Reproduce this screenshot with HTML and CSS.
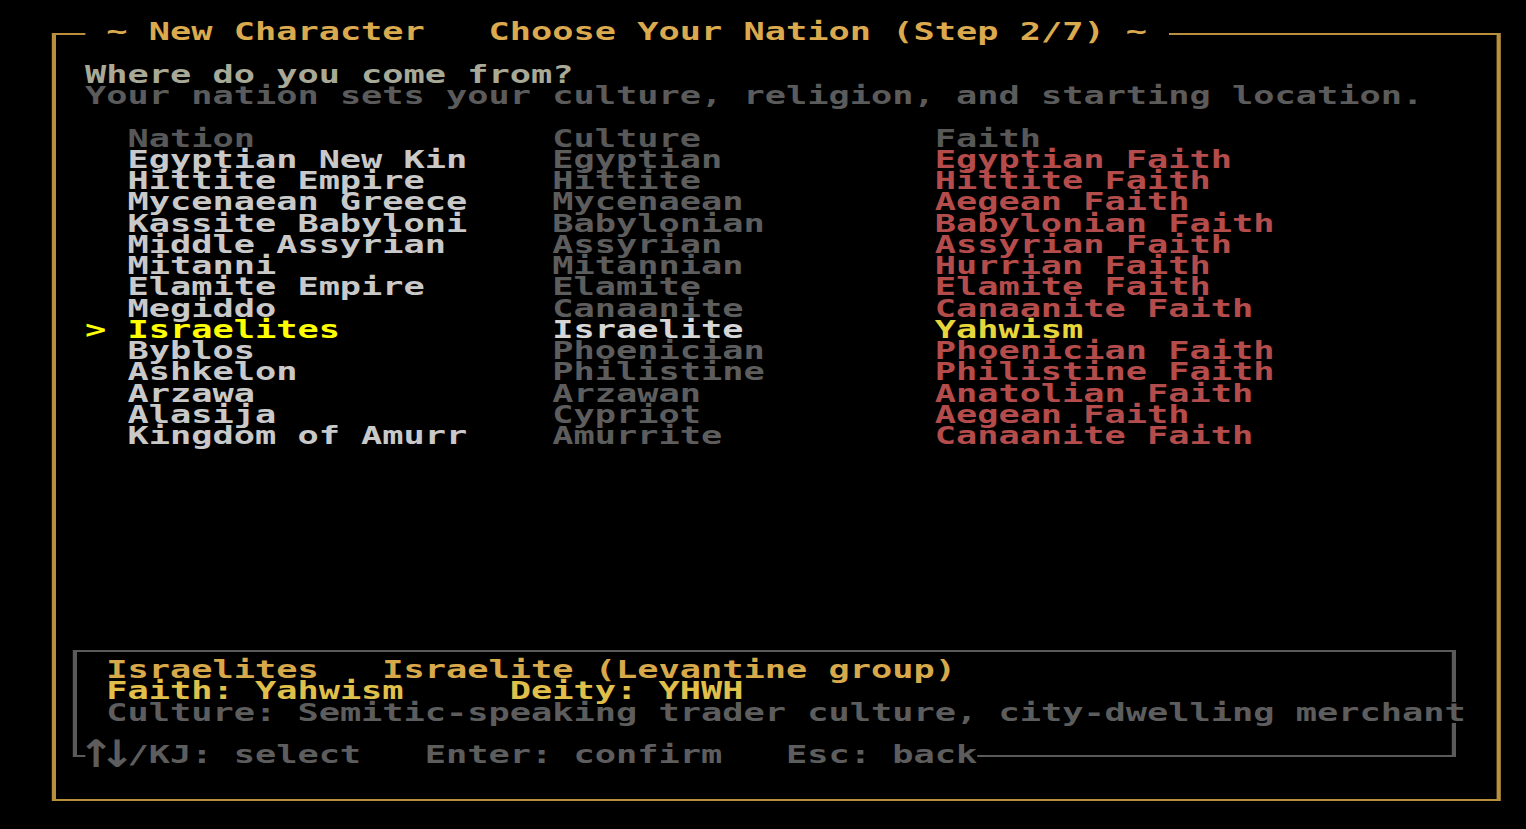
FILE: index.html
```html
<!DOCTYPE html>
<html>
<head>
<meta charset="utf-8">
<title>New Character</title>
<link rel="stylesheet" href="styles.css">
</head>
<body>
<div class="screen">
  <div class="frame">
    <div class="title"> ~ New Character   Choose Your Nation (Step 2/7) ~ </div>
    <div class="intro">
      <div class="question">Where do you come from?</div>
      <div class="subtitle">Your nation sets your culture, religion, and starting location.</div>
    </div>
    <div class="table">
      <div class="row head"><span class="mark"></span><span>Nation</span><span>Culture</span><span>Faith</span></div>
      <div class="row"><span class="mark"></span><span class="nation">Egyptian New Kin</span><span class="culture">Egyptian</span><span class="faith">Egyptian Faith</span></div>
      <div class="row"><span class="mark"></span><span class="nation">Hittite Empire</span><span class="culture">Hittite</span><span class="faith">Hittite Faith</span></div>
      <div class="row"><span class="mark"></span><span class="nation">Mycenaean Greece</span><span class="culture">Mycenaean</span><span class="faith">Aegean Faith</span></div>
      <div class="row"><span class="mark"></span><span class="nation">Kassite Babyloni</span><span class="culture">Babylonian</span><span class="faith">Babylonian Faith</span></div>
      <div class="row"><span class="mark"></span><span class="nation">Middle Assyrian</span><span class="culture">Assyrian</span><span class="faith">Assyrian Faith</span></div>
      <div class="row"><span class="mark"></span><span class="nation">Mitanni</span><span class="culture">Mitannian</span><span class="faith">Hurrian Faith</span></div>
      <div class="row"><span class="mark"></span><span class="nation">Elamite Empire</span><span class="culture">Elamite</span><span class="faith">Elamite Faith</span></div>
      <div class="row"><span class="mark"></span><span class="nation">Megiddo</span><span class="culture">Canaanite</span><span class="faith">Canaanite Faith</span></div>
      <div class="row selected"><span class="mark">&gt;</span><span class="nation">Israelites</span><span class="culture">Israelite</span><span class="faith">Yahwism</span></div>
      <div class="row"><span class="mark"></span><span class="nation">Byblos</span><span class="culture">Phoenician</span><span class="faith">Phoenician Faith</span></div>
      <div class="row"><span class="mark"></span><span class="nation">Ashkelon</span><span class="culture">Philistine</span><span class="faith">Philistine Faith</span></div>
      <div class="row"><span class="mark"></span><span class="nation">Arzawa</span><span class="culture">Arzawan</span><span class="faith">Anatolian Faith</span></div>
      <div class="row"><span class="mark"></span><span class="nation">Alasija</span><span class="culture">Cypriot</span><span class="faith">Aegean Faith</span></div>
      <div class="row"><span class="mark"></span><span class="nation">Kingdom of Amurr</span><span class="culture">Amurrite</span><span class="faith">Canaanite Faith</span></div>
    </div>
    <div class="detail">
      <div class="line detail-name">Israelites   Israelite (Levantine group)</div>
      <div class="line detail-faith">Faith: Yahwism     Deity: YHWH</div>
      <div class="line detail-culture">Culture: Semitic-speaking trader culture, city-dwelling merchan<span class="cover">t</span></div>
      <div class="line keys"><span class="arrows"><span class="arrow">↑</span><span class="arrow">↓</span></span>/KJ: select   Enter: confirm   Esc: back</div>
    </div>
  </div>
</div>
</body>
</html>
```

FILE: styles.css
```css
html, body {
  margin: 0;
  padding: 0;
  background: #000;
  overflow: hidden;
}

body {
  width: 1526px;
  height: 829px;
}

.screen {
  --rh: 21.26px;
  --cw: 15.1786px;
  box-sizing: border-box;
  width: 1090px;
  height: 829px;
  padding-top: 33px;
  font-family: "DejaVu Sans Mono", "Liberation Mono", monospace;
  font-weight: bold;
  font-size: 25.21px;
  line-height: var(--rh);
  color: #c8c8c8;
  transform: scaleX(1.4);
  transform-origin: 0 0;
}

.frame {
  position: relative;
  box-sizing: border-box;
  margin-left: calc(2ch + 7px);
  width: calc(68ch + 3px);
  height: 768px;
  border: 2px solid #b8903c;
  border-left-width: 3px;
  border-right-width: 3px;
  padding-top: 28.78px;
}

.title {
  position: absolute;
  top: -13.74px;
  left: calc(2ch - 10px);
  background: #000;
  color: #dba94e;
  white-space: pre;
}

.intro {
  margin-left: calc(2ch - 10px);
  margin-bottom: var(--rh);
}

.question,
.subtitle,
.line {
  white-space: pre;
}

.question {
  color: #a9a997;
}

.subtitle {
  color: #5b5b5b;
}

.table {
  margin-left: calc(2ch - 10px);
}

.row {
  display: grid;
  grid-template-columns: 2ch 20ch 18ch auto;
}

.row span {
  white-space: pre;
}

.head {
  color: #585858;
}

.nation {
  color: #c9c9c9;
}

.culture {
  color: #5d5d5d;
}

.faith {
  color: #b54c4c;
}

.selected .mark,
.selected .nation {
  color: #ffff00;
}

.selected .culture {
  color: #d6d6d6;
}

.selected .faith {
  color: #e6d63c;
}

.detail {
  position: relative;
  box-sizing: border-box;
  margin-top: 203.54px;
  margin-left: calc(1ch - 4px);
  width: calc(65ch + 2px);
  height: 107px;
  border: 2px solid #5a5a5a;
  border-left-width: 3px;
  border-right-width: 3px;
  padding: 7.06px 0 0 calc(2ch - 9px);
}

.detail-name {
  color: #d8a94b;
}

.detail-faith {
  color: #e0c04a;
}

.detail-culture {
  color: #5d5d5d;
}

.cover {
  display: inline-block;
  height: var(--rh);
  vertical-align: top;
  background: #000;
}

.keys {
  position: absolute;
  left: calc(1ch - 9px);
  top: 92.12px;
  background: #000;
  color: #5d5d5d;
}

.arrows {
  display: inline-flex;
  width: calc(2 * var(--cw));
  height: var(--rh);
  vertical-align: top;
}

.arrow {
  display: flex;
  justify-content: center;
  align-items: center;
  width: var(--cw);
  height: var(--rh);
  font-family: "DejaVu Sans", "Liberation Sans", sans-serif;
  font-size: 28px;
  line-height: 1;
  transform: scale(1.1, 1.35);
}
```
